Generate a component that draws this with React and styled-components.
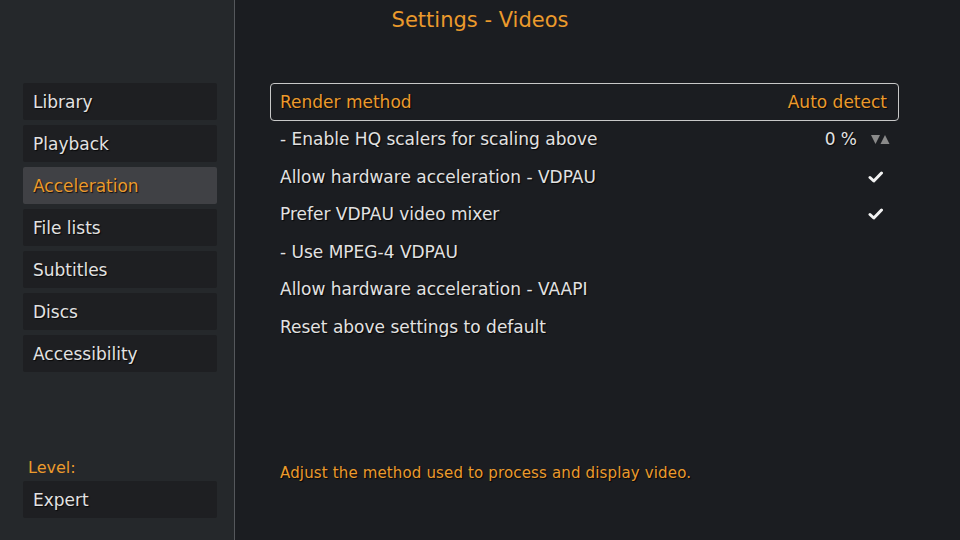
import React from "react";
import styled, { createGlobalStyle } from "styled-components";

const Global = createGlobalStyle`
  html, body { margin: 0; padding: 0; background: #1b1d21; }
  body { font-family: "DejaVu Sans", "Noto Sans", sans-serif; }
`;

const Screen = styled.div`
  width: 960px;
  height: 540px;
  display: flex;
  overflow: hidden;
  background: #1b1d21;
  position: relative;
`;

const Sidebar = styled.aside`
  width: 235px;
  flex: none;
  background: #25282b;
  border-right: 1px solid #55585c;
  display: flex;
  flex-direction: column;
  padding: 83px 17px 22px 23px;
  box-sizing: border-box;
`;

const Menu = styled.nav`
  display: flex;
  flex-direction: column;
  gap: 5px;
`;

const MenuItem = styled.div`
  height: 37px;
  border-radius: 2px;
  background: ${(p) => (p.$active ? "#404145" : "#1e1f22")};
  color: ${(p) => (p.$active ? "#eb9a2c" : "#e2e2e2")};
  font-size: 17px;
  display: flex;
  align-items: center;
  padding-left: 10px;
  box-sizing: border-box;
  text-shadow: 1px 1px 1px rgba(0, 0, 0, 0.8);
`;

const LevelLabel = styled.div`
  margin-top: auto;
  color: #eb9a2c;
  font-size: 16px;
  padding-left: 5px;
  margin-bottom: 4px;
`;

const Main = styled.main`
  flex: 1;
  display: flex;
  flex-direction: column;
  position: relative;
`;

const Title = styled.h1`
  position: absolute;
  left: 0;
  right: 0;
  top: 0;
  margin: 0;
  height: 40px;
  font-size: 21px;
  font-weight: normal;
  color: #eb9a2c;
  display: flex;
  align-items: center;
  justify-content: center;
`;

const List = styled.div`
  margin: 83px 0 0 35px;
  width: 629px;
  display: flex;
  flex-direction: column;
`;

const Row = styled.div`
  height: 37.5px;
  box-sizing: border-box;
  display: flex;
  align-items: center;
  justify-content: space-between;
  padding: 0 11px 0 9px;
  font-size: 17px;
  color: ${(p) => (p.$focus ? "#eb9a2c" : "#e2e2e2")};
  border: 1px solid ${(p) => (p.$focus ? "#c8c8c8" : "transparent")};
  border-radius: 4px;
  text-shadow: 1px 1px 1px rgba(0, 0, 0, 0.8);
`;

const Value = styled.div`
  display: flex;
  align-items: center;
  gap: 14px;
  margin-right: -3px;
`;

const Description = styled.p`
  position: absolute;
  left: 45px;
  top: 464px;
  margin: 0;
  font-size: 15px;
  letter-spacing: 0.15px;
  color: #eb9a2c;
  text-shadow: 1px 1px 1px rgba(0, 0, 0, 0.8);
`;

const Check = () => (
  <svg width="16" height="14" viewBox="0 0 16 14" style={{ marginRight: 3 }}>
    <path d="M2 7.5 L5.8 11 L13.5 3" fill="none" stroke="#f2f2f2" strokeWidth="3" strokeLinecap="round" strokeLinejoin="round" />
  </svg>
);

const Arrows = () => (
  <svg width="19" height="9" viewBox="0 0 19 9">
    <polygon points="0,0 9,0 4.5,9" fill="#8a8a8a" />
    <polygon points="9.5,9 18.5,9 14,0" fill="#8a8a8a" />
  </svg>
);

const menu = ["Library", "Playback", "Acceleration", "File lists", "Subtitles", "Discs", "Accessibility"];

export default function App() {
  return (
    <>
      <Global />
      <Screen>
        <Title>Settings - Videos</Title>
        <Sidebar>
          <Menu>
            {menu.map((m) => (
              <MenuItem key={m} $active={m === "Acceleration"}>{m}</MenuItem>
            ))}
          </Menu>
          <LevelLabel>Level:</LevelLabel>
          <MenuItem>Expert</MenuItem>
        </Sidebar>
        <Main>
          <List>
            <Row $focus>
              <span>Render method</span>
              <span>Auto detect</span>
            </Row>
            <Row>
              <span>- Enable HQ scalers for scaling above</span>
              <Value>
                <span>0 %</span>
                <Arrows />
              </Value>
            </Row>
            <Row>
              <span>Allow hardware acceleration - VDPAU</span>
              <Check />
            </Row>
            <Row>
              <span>Prefer VDPAU video mixer</span>
              <Check />
            </Row>
            <Row>
              <span>- Use MPEG-4 VDPAU</span>
            </Row>
            <Row>
              <span>Allow hardware acceleration - VAAPI</span>
            </Row>
            <Row>
              <span>Reset above settings to default</span>
            </Row>
          </List>
          <Description>Adjust the method used to process and display video.</Description>
        </Main>
      </Screen>
    </>
  );
}
